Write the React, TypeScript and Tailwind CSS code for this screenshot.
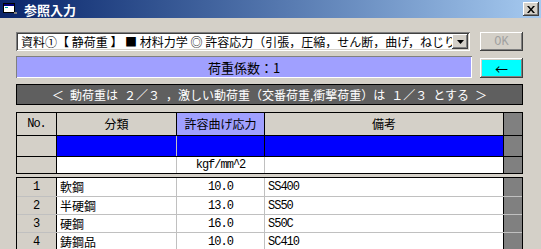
import React from "react";

const M = { fontFamily: '"Liberation Mono", "Noto Sans CJK JP", monospace' };
const J = { fontFamily: '"Noto Sans CJK JP", "Liberation Sans", sans-serif' };

const raised =
  "shadow-[inset_-1px_-1px_#404040,inset_1px_1px_#ffffff,inset_-2px_-2px_#808080,inset_2px_2px_#d4d0c8]";
const sunken =
  "shadow-[inset_1px_1px_#808080,inset_-1px_-1px_#ffffff,inset_2px_2px_#404040,inset_-2px_-2px_#d4d0c8]";

const rows = [
  { no: "1", name: "軟鋼", v: "10.0", note: "SS400" },
  { no: "2", name: "半硬鋼", v: "13.0", note: "SS50" },
  { no: "3", name: "硬鋼", v: "16.0", note: "S50C" },
  { no: "4", name: "鋳鋼品", v: "10.0", note: "SC410" },
];

export default function App() {
  return (
    <div className="w-[541px] h-[249px] overflow-hidden bg-[#d4d0c8] flex flex-col text-black" style={J}>
      {/* title bar */}
      <div className="h-[18px] shrink-0 flex items-center bg-gradient-to-r from-[#0a246a] to-[#a6caf0] pl-[3px] pr-[2px]">
        <svg width="14" height="12" viewBox="0 0 14 12" className="shrink-0">
          <rect x="0.5" y="0.5" width="11" height="9" fill="#ffffff" stroke="#000" />
          <rect x="1" y="1" width="10" height="2" fill="#000080" />
          <rect x="2" y="4" width="3" height="1" fill="#00a0a0" />
          <rect x="11" y="9" width="3" height="2" fill="#808080" />
        </svg>
        <span className="ml-[7px] text-white font-bold text-[13px] leading-none">参照入力</span>
        <div className="flex-1" />
        <div className={`w-[16px] h-[14px] bg-[#d4d0c8] ${raised} flex items-center justify-center`}>
          <svg width="8" height="7" viewBox="0 0 8 7">
            <path d="M0 0h2l2 2.5L6 0h2L5 3.5 8 7H6L4 4.5 2 7H0l3-3.5z" fill="#000" />
          </svg>
        </div>
      </div>

      <div className="flex flex-col pl-[16px] pr-[18px]">
        {/* combo row */}
        <div className="mt-[14px] flex items-start">
          <div className={`w-[454px] h-[19px] bg-white ${sunken} flex items-center pl-[5px] pr-[2px] py-[2px]`}>
            <div className="flex-1 overflow-hidden whitespace-nowrap text-[12px] leading-none">
              資料①【 静荷重 】 ■ 材料力学 ◎ 許容応力（引張，圧縮，せん断，曲げ，ねじり）
            </div>
            <div className={`w-[16px] h-[15px] bg-[#d4d0c8] ${raised} flex items-center justify-center shrink-0`}>
              <svg width="7" height="4" viewBox="0 0 7 4">
                <path d="M0 0h7L3.5 4z" fill="#000" />
              </svg>
            </div>
          </div>
          <div
            className={`ml-[10px] w-[43px] h-[19px] bg-[#d4d0c8] ${raised} flex items-center justify-center text-[12px] text-[#a0a0a0]`}
            style={M}
          >
            OK
          </div>
        </div>

        {/* factor row */}
        <div className="mt-[5px] flex items-end">
          <div className="w-[456px] h-[22px] bg-[#a0a0ff] shadow-[inset_1px_1px_#808080,inset_-1px_-1px_#ffffff] flex items-center justify-center text-[13px] leading-none">
            荷重係数：1
          </div>
          <div className={`ml-[8px] w-[43px] h-[20px] bg-[#00ffff] ${raised} flex items-center justify-center text-[13px] leading-none`}>
            ←
          </div>
        </div>

        {/* note bar */}
        <div className="mt-[6px] w-[507px] h-[21px] bg-[#5f5f5f] border border-black flex items-center justify-center text-white text-[12px] leading-none whitespace-nowrap">
          {"＜\u2002動荷重は\u2002２／３\u2002，激しい動荷重（交番荷重,衝撃荷重）は\u2002１／３\u2002とする\u2002＞"}
        </div>

        {/* header table */}
        <div className="mt-[7px] w-[507px] border border-black flex flex-col text-[12px] leading-none">
          <div className="flex h-[23px] border-b border-black">
            <div className="w-[40px] border-r border-black flex items-center justify-center tracking-[-1px]" style={M}>No.</div>
            <div className="w-[120px] border-r border-black flex items-center justify-center">分類</div>
            <div className="w-[88px] border-r border-black bg-[#a0a0ff] flex items-center justify-center">許容曲げ応力</div>
            <div className="w-[239px] border-r border-black flex items-center justify-center">備考</div>
            <div className="w-[18px] bg-[#808080]" />
          </div>
          <div className="flex h-[21px] border-b border-black">
            <div className="w-[40px] border-r border-black" />
            <div className="w-[120px] border-r border-[#c0c0c0] bg-[#0000ff]" />
            <div className="w-[88px] border-r border-black bg-[#0000ff]" />
            <div className="w-[239px] border-r border-black bg-[#0000ff]" />
            <div className="w-[18px] bg-[#808080]" />
          </div>
          <div className="flex h-[16px]">
            <div className="w-[40px] border-r border-black" />
            <div className="w-[120px] border-r border-[#c0c0c0] bg-white" />
            <div className="w-[88px] border-r border-[#c0c0c0] bg-white flex items-center justify-center tracking-[-1px]" style={M}>
              kgf/mm^2
            </div>
            <div className="w-[239px] border-r border-black bg-white" />
            <div className="w-[18px] bg-[#808080]" />
          </div>
        </div>

        {/* data table */}
        <div className="mt-[3px] w-[507px] border-t border-l border-r border-black flex flex-col text-[12px] leading-none">
          {rows.map((r, i) => (
            <div key={r.no} className={`flex ${i === 0 ? "h-[19px]" : "h-[18px]"} border-b border-[#c0c0c0]`}>
              <div className="w-[40px] border-r border-black flex items-center justify-center" style={M}>
                {r.no}
              </div>
              <div className="w-[120px] border-r border-[#c0c0c0] bg-white flex items-center pl-[3px]">{r.name}</div>
              <div className="w-[88px] border-r border-[#c0c0c0] bg-white flex items-center justify-center tracking-[-1px]" style={M}>
                {r.v}
              </div>
              <div className="w-[239px] border-r border-black bg-white flex items-center pl-[3px] tracking-[-1px]" style={M}>
                {r.note}
              </div>
              <div className="w-[18px] bg-[#808080]" />
            </div>
          ))}
        </div>
      </div>
    </div>
  );
}
